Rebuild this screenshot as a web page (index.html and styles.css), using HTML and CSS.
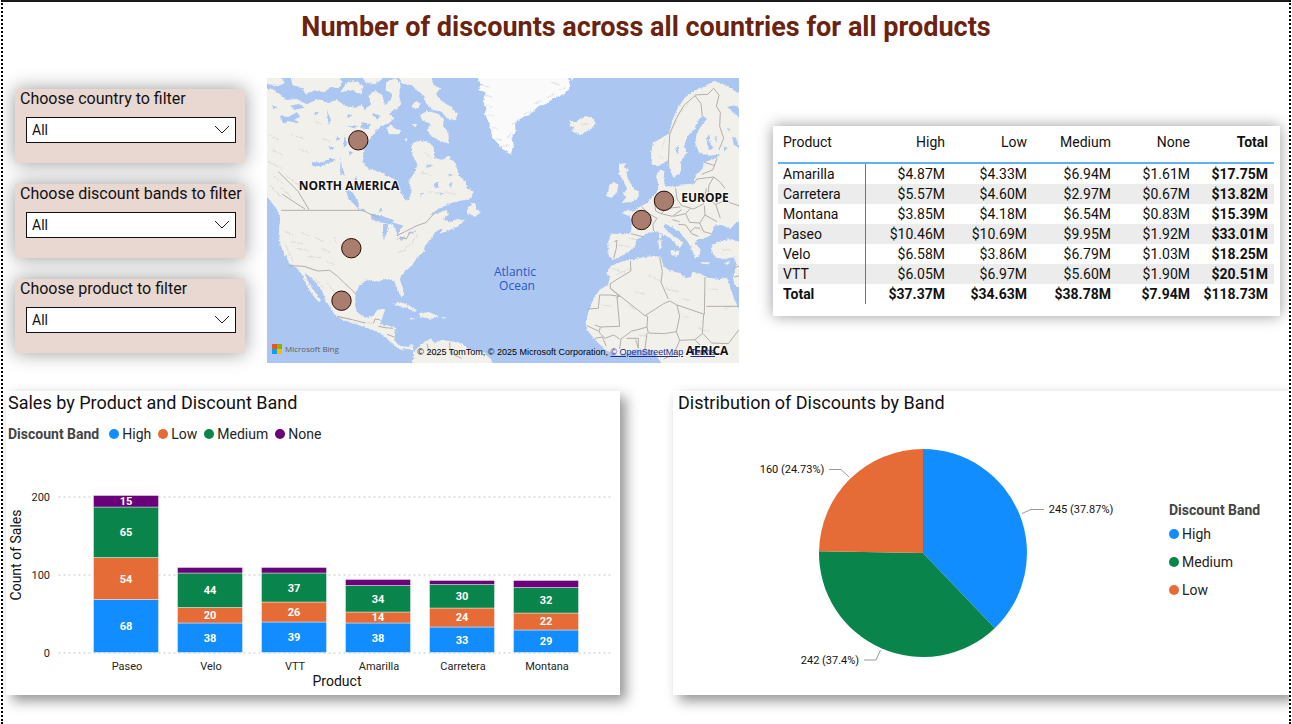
FILE: index.html
```html
<!DOCTYPE html>
<html lang="en">
<head>
<meta charset="utf-8">
<meta name="viewport" content="width=device-width, initial-scale=1">
<title>Number of discounts</title>
<link rel="stylesheet" href="styles.css">
</head>
<body>
<main class="report">
  <h1 class="report-title">Number of discounts across all countries for all products</h1>

  <div class="top-row">
    <form class="filters">
      <div class="filter">
        <label class="filter-label" for="country">Choose country to filter</label>
        <div class="select-box">
          <select id="country" class="select"><option>All</option></select>
          <svg class="chevron" viewBox="0 0 16 9" aria-hidden="true"><path d="M1 1l7 7 7-7"/></svg>
        </div>
      </div>
      <div class="filter">
        <label class="filter-label" for="band">Choose discount bands to filter</label>
        <div class="select-box">
          <select id="band" class="select"><option>All</option></select>
          <svg class="chevron" viewBox="0 0 16 9" aria-hidden="true"><path d="M1 1l7 7 7-7"/></svg>
        </div>
      </div>
      <div class="filter">
        <label class="filter-label" for="product">Choose product to filter</label>
        <div class="select-box">
          <select id="product" class="select"><option>All</option></select>
          <svg class="chevron" viewBox="0 0 16 9" aria-hidden="true"><path d="M1 1l7 7 7-7"/></svg>
        </div>
      </div>
    </form>

    <section class="map" aria-label="Map of countries">
      <svg class="map-svg" viewBox="267 78 472 285" preserveAspectRatio="xMidYMid slice">
        <defs>
          <filter id="coast" x="-5%" y="-5%" width="110%" height="110%">
            <feTurbulence type="fractalNoise" baseFrequency="0.16" numOctaves="3" seed="4"/>
            <feDisplacementMap in="SourceGraphic" scale="9" xChannelSelector="R" yChannelSelector="G"/>
          </filter>
        </defs>
        <rect class="water" x="267" y="78" width="472" height="285"/>
        <g transform="translate(265 75) scale(.33333)">
          <g class="land" filter="url(#coast)">
            <!-- North and Central America -->
            <path d="M-10 45L20 42 45 58 65 75 95 72 125 88 160 72 190 84 215 74 240 92 270 98 290 90 300 104 318 88 310 62 330 48 352 60 360 90 380 72 392 98 372 118 388 128 372 145 350 152 330 172 312 196 296 215 293 262 312 282 345 290 368 305 388 312 402 340 418 372 432 376 440 345 430 318 446 298 458 268 442 240 440 205 462 198 490 200 506 215 508 250 532 254 548 243 572 265 580 300 600 318 604 338 626 350 618 372 580 378 548 388 520 402 495 420 520 414 546 404 552 418 535 432 556 440 580 432 600 436 580 454 548 468 526 476 532 460 510 472 498 490 480 512 476 530 455 550 440 572 418 590 404 612 414 640 418 662 408 664 396 640 386 616 362 612 338 620 304 616 284 632 272 650 270 690 276 712 300 728 326 722 336 704 360 702 352 730 344 748 372 752 392 758 388 794 402 812 430 816 442 808 446 826 424 822 406 824 382 808 362 786 344 774 310 760 268 746 232 734 208 718 196 698 182 676 172 650 150 618 130 602 118 592 132 624 150 650 168 676 162 682 146 664 128 638 114 604 96 580 74 566 58 536 44 504 42 462 46 430 36 404 12 372-10 350Z"/>
            <path d="M440 880L448 828 474 804 498 790 508 806 530 794 566 800 592 806 612 824 650 828 676 850 690 880Z"/>
            <!-- Arctic islands -->
            <path d="M78 9L82 30 112 40 122 58 150 46 178 52 196 36 222 40 232 20 216 0 90 0Z"/>
            <path d="M6 0L40 0 60 22 40 34 6 26Z"/>
            <path d="M226 52L262 46 286 58 296 34 272 18 246 22Z"/>
            <path d="M290 0L300 22 330 28 352 12 350 0Z"/>
            <path d="M364 20L392 10 408 28 402 56 408 88 392 104 376 84 382 58 362 46Z"/>
            <path d="M398 0L412 26 440 30 458 48 478 62 482 84 502 104 530 110 546 130 572 136 578 116 556 94 530 78 512 58 526 40 506 30 498 0Z"/>
            <path d="M440 90L456 78 466 88 458 100 442 98ZM466 120L486 108 520 116 536 134 534 154 550 170 552 206 526 198 500 184 486 166 496 146 470 136ZM366 160L378 148 392 162 408 166 402 178 372 178ZM440 148L456 146 450 156ZM418 192L428 190 424 200Z"/>
            <path d="M606 404L622 384 632 386 634 402 646 412 632 424 606 416Z"/>
            <!-- Caribbean -->
            <path d="M386 686L406 682 430 690 456 706 450 710 424 698 390 690ZM462 714L492 712 522 724 498 732 466 726ZM434 728L452 730 440 734ZM526 726L544 728 538 732Z"/>
            <!-- Iceland -->
            <path d="M906 148L918 146 912 136 930 142 960 124 984 128 992 146 974 164 946 180 920 168 928 156Z"/>
            <!-- Britain and Ireland -->
            <path d="M1062 268L1082 264 1078 278 1090 282 1084 300 1096 324 1110 344 1122 350 1118 372 1100 380 1070 384 1084 366 1074 358 1086 342 1076 318 1062 298ZM1032 334L1046 320 1060 330 1056 352 1040 368 1022 362 1030 350Z"/>
            <!-- Europe -->
            <path d="M1160 268L1158 232 1164 204 1190 188 1212 176 1218 150 1228 120 1242 92 1262 66 1286 48 1320 34 1346 18 1372 26 1390 36 1430 60 1430 438 1412 444 1396 462 1372 450 1348 452 1338 480 1316 492 1298 492 1290 504 1306 522 1304 544 1290 550 1278 516 1262 492 1246 474 1220 456 1202 446 1196 454 1212 474 1238 490 1254 504 1244 520 1230 504 1214 488 1186 474 1168 468 1146 474 1134 484 1114 494 1110 514 1086 534 1058 548 1046 554 1030 542 1030 500 1038 476 1082 478 1098 472 1100 440 1094 424 1068 414 1086 406 1110 408 1124 396 1146 384 1166 362 1178 346 1180 330 1174 302 1184 284 1198 288 1196 310 1200 332 1232 336 1258 328 1286 326 1292 300 1312 284 1318 262 1356 248 1366 238 1330 242 1302 232 1290 202 1296 174 1310 150 1326 132 1314 122 1300 134 1288 162 1268 184 1258 210 1266 232 1248 260 1248 292 1226 308 1216 288 1208 256 1190 268 1176 274Z"/>
            <path d="M1182 470L1190 482 1188 492 1182 488ZM1180 496L1190 496 1190 518 1182 524ZM1216 526L1244 528 1236 544 1218 536ZM1310 562L1336 562 1330 568 1308 566ZM1378 564L1396 558 1390 570Z"/>
            <!-- Africa -->
            <path d="M1056 564L1088 556 1130 548 1164 542 1188 546 1196 574 1212 586 1244 594 1262 610 1278 606 1282 590 1306 596 1328 608 1364 612 1386 608 1396 640 1408 672 1430 720 1430 880 1204 880 1180 852 1166 828 1110 824 1060 842 1020 824 990 794 966 764 962 742 972 706 986 670 1004 644 1028 630 1036 606 1024 594 1036 576Z"/>
            <path d="M1340 512L1362 500 1394 492 1430 502 1430 630 1412 636 1404 610 1414 566 1408 546 1378 552 1354 548 1342 532Z"/>
          </g>
          <path class="ice" filter="url(#coast)" d="M634 0L648 28 640 44 662 52 654 78 664 98 660 116 674 150 682 186 712 222 738 236 746 206 738 188 752 170 750 146 772 126 794 120 820 94 842 88 866 70 900 56 916 36 908 0ZM912 0L920 18 930 0Z"/>
          <path class="ice-shade" filter="url(#coast)" d="M650 30l26 8M658 60l24 6M664 90l20 8M668 118l20 6M680 156l16 4M690 190l22 6M712 214l20-4M728 190l12-20M740 150l18-16M776 118l22-10M810 86l20-10M846 70l22-14M880 46l22-8M860 22l24 8"/>

          <!-- Lakes and inland water -->
          <g class="lake" filter="url(#coast)">
            <path d="M44 122L70 126 94 112 106 124 88 134 104 146 70 138 56 148ZM76 92L104 86 116 98 90 104ZM140 262L172 262 196 248 214 256 190 264 168 274 142 272ZM238 178L246 210 236 218ZM226 240L230 274 240 302 226 294ZM268 318L274 300 278 322ZM240 338L258 346 278 376 284 406 266 386 250 372ZM250 226L264 232 254 244ZM246 154L278 152 268 160ZM186 104L198 136 190 150ZM286 160L290 140 316 148 310 162ZM320 116L346 120 338 134ZM506 328L516 320 522 336 510 340ZM552 328L562 322 558 338ZM466 352L478 354 468 362ZM550 296L566 300 552 304ZM190 214l20 4-14 6ZM216 186l10 6-12 6ZM486 268l16 4-14 8ZM526 352l12 4-12 6ZM288 400l14 4-10 6ZM346 398l8 10-12 2ZM22 92l16 4-14 6ZM150 110l14 4-16 6ZM246 118l20 2-18 8Z"/>
            <path d="M316 414L350 422 388 436 376 448 344 442 320 434ZM354 448L370 446 366 472 356 498 354 474ZM376 440L396 446 416 452 404 464 398 482 392 464ZM394 492L424 482 412 496ZM424 476L452 466 444 476Z"/>
            <path d="M1386 96L1410 90 1430 108 1430 132 1404 112ZM1324 194L1332 176 1338 210 1348 220 1332 226ZM1348 188L1354 184 1356 204ZM1402 188L1412 186 1422 220 1406 208ZM1376 212L1388 220 1378 230ZM1230 222L1242 210 1240 240ZM1386 158L1396 162 1392 170Z"/>
          </g>

          <!-- Relief shading -->
          <g class="relief" filter="url(#coast)">
            <path d="M10 180l30 14M20 224l34 16M8 260l42 20M22 300l32 26M48 338l30 28M96 220l34 12M80 180l36 10M150 140l20 8M170 190l26 8M16 330l34 40M64 300l40 34"/>
            <path d="M60 470l24 10M78 500l36 6M110 472l24 12M96 520l40 8M150 486l24 14M126 544l42 4M170 520l30 14M184 560l26 10M206 486l10 24M62 510l22 50M120 576l28 10M150 610l26 30M184 620l28 36M214 660l34 26M216 724l44 10M296 742l34 4M396 534l24-8M420 520l26-20M440 500l18-20"/>
            <path d="M480 232l18 20M466 292l34 8M490 350l34 4M540 350l30 8M1190 220l10-28M1222 160l16-26M1250 110l20-24M1180 240l14 10M1090 490l24 4M1060 510l34 6M1300 460l20 10M1370 522l30 4M950 150l20-4"/>
            <path d="M1110 650l30 8M1090 690l20 14M1200 640l40 10M1250 670l26 6M1150 600l40 20M1052 600l44-20M1248 720l24 8M1380 700l20-6M1010 690l30 4M1120 780l30 4M1300 760l30 8M1040 580l30 10M1330 640l30 4"/>
          </g>

          <!-- Borders -->
          <g class="border">
            <path d="M48 406H292L322 420 345 430M396 482L424 468 456 452 484 442 510 412M404 486L424 492 436 470M74 572L118 574 158 588 194 586 218 604 240 626 264 648 274 660M216 724L262 734 300 744M326 744L330 732 344 734M340 754L360 758 384 760M366 778L388 786M52 358L120 402M40 290L100 350 132 404M486 806L492 830 520 842M554 802L556 834 590 850"/>
            <path d="M1210 266L1214 178 1232 134 1256 92 1290 62 1308 86 1312 124M1290 60L1328 58 1346 40 1362 60 1354 94 1366 112 1364 154 1376 190 1362 224M1356 250L1344 284 1310 298M1318 262L1350 272M1286 326L1296 312 1346 306 1364 320 1380 340M1232 340L1236 372 1250 392 1286 402 1316 386 1324 340M1346 306L1332 330 1328 370 1352 388 1378 378 1422 392M1168 372L1172 408 1188 416 1222 424 1250 404M1130 396L1152 416 1176 430 1164 448 1166 468M1188 416L1206 400 1246 396M1226 424L1262 416 1276 400M1262 416L1274 442 1304 444 1320 420 1318 392M1240 448L1262 450 1280 476 1300 484M1304 444L1316 470 1338 476M1320 420L1356 440M1352 388L1366 430M1098 476L1136 486M1048 500L1056 496 1054 520 1046 550M1276 470L1290 458 1304 460M1222 434L1244 440"/>
            <path d="M1096 558L1098 588 1064 608 1036 626M1036 626L1036 640 1140 722 1196 686 1214 678 1236 690 1318 718 1320 606M1036 640L1064 664 1034 660 1004 660M1004 660L1000 700 968 702M1064 664L1056 666 1064 754 1006 756 990 750M1140 722L1148 724 1146 756 1118 764 1100 768 1068 792 1064 822M1184 546L1192 590 1188 622 1210 672M1236 690L1244 724 1234 770 1198 776 1150 774 1146 756M1316 718L1312 776 1290 794 1314 820 1332 824M1324 694H1422M1234 770L1244 796 1226 838 1196 852M1244 796L1290 794M1006 756L1002 772 1020 790 1046 780 1064 792M1084 790H1120V820M1120 820L1112 794M1146 774L1140 822M966 752L1000 768M1314 776L1340 804 1390 806 1422 764M990 790L1012 786 1024 814M1404 580L1430 570M1408 606L1430 600"/>
          </g>
        </g>

        <g class="bubble">
          <circle cx="358.300" cy="140.300" r="9.700"/>
          <circle cx="351.300" cy="248.200" r="9.700"/>
          <circle cx="341.500" cy="300.700" r="9.700"/>
          <circle cx="664" cy="200.800" r="9.700"/>
          <circle cx="641.500" cy="220" r="9.700"/>
        </g>
        <g class="place">
          <text x="349" y="190">NORTH AMERICA</text>
          <text x="705" y="202">EUROPE</text>
          <text x="707" y="355">AFRICA</text>
        </g>
        <g class="ocean">
          <text x="515" y="276">Atlantic</text>
          <text x="517" y="290">Ocean</text>
        </g>
        <rect x="272" y="344" width="5" height="5" fill="#f25022"/>
        <rect x="277" y="344" width="5" height="5" fill="#7fba00"/>
        <rect x="272" y="349" width="5" height="5" fill="#00a4ef"/>
        <rect x="277" y="349" width="5" height="5" fill="#ffb900"/>
        <text class="bing" x="285" y="352">Microsoft Bing</text>
      </svg>
      <p class="copyright">© 2025 TomTom, © 2025 Microsoft Corporation, <a href="#osm">© OpenStreetMap</a>&nbsp;&nbsp; <a href="#terms">Terms</a></p>
    </section>

    <section class="table-card">
      <table class="matrix">
        <colgroup><col class="col-name"><col class="col-high"><col class="col-low"><col class="col-medium"><col class="col-none"><col class="col-total"></colgroup>
        <thead>
          <tr><th scope="col">Product</th><th scope="col">High</th><th scope="col">Low</th><th scope="col">Medium</th><th scope="col">None</th><th scope="col" class="strong">Total</th></tr>
        </thead>
        <tbody>
          <tr><th scope="row">Amarilla</th><td>$4.87M</td><td>$4.33M</td><td>$6.94M</td><td>$1.61M</td><td class="strong">$17.75M</td></tr>
          <tr><th scope="row">Carretera</th><td>$5.57M</td><td>$4.60M</td><td>$2.97M</td><td>$0.67M</td><td class="strong">$13.82M</td></tr>
          <tr><th scope="row">Montana</th><td>$3.85M</td><td>$4.18M</td><td>$6.54M</td><td>$0.83M</td><td class="strong">$15.39M</td></tr>
          <tr><th scope="row">Paseo</th><td>$10.46M</td><td>$10.69M</td><td>$9.95M</td><td>$1.92M</td><td class="strong">$33.01M</td></tr>
          <tr><th scope="row">Velo</th><td>$6.58M</td><td>$3.86M</td><td>$6.79M</td><td>$1.03M</td><td class="strong">$18.25M</td></tr>
          <tr><th scope="row">VTT</th><td>$6.05M</td><td>$6.97M</td><td>$5.60M</td><td>$1.90M</td><td class="strong">$20.51M</td></tr>
        </tbody>
        <tfoot>
          <tr><th scope="row">Total</th><td>$37.37M</td><td>$34.63M</td><td>$38.78M</td><td>$7.94M</td><td>$118.73M</td></tr>
        </tfoot>
      </table>
    </section>
  </div>

  <div class="bottom-row">
    <section class="card">
      <h2 class="card-title">Sales by Product and Discount Band</h2>
      <div class="legend">
        <span class="legend-title">Discount Band</span>
        <span class="key"><i class="dot high"></i>High</span>
        <span class="key"><i class="dot low"></i>Low</span>
        <span class="key"><i class="dot medium"></i>Medium</span>
        <span class="key"><i class="dot none"></i>None</span>
      </div>
      <svg class="bars" viewBox="6 450 614 245" role="img" aria-label="Count of sales by product and discount band">
        <g class="grid"><path d="M59 497H614M59 575H614M59 653H614"/></g>
        <g class="tick end"><text x="50" y="501">200</text><text x="50" y="579">100</text><text x="50" y="657">0</text></g>
        <text class="axis" transform="translate(21 555) rotate(-90)">Count of Sales</text>
        <text class="axis" x="337" y="686">Product</text>
        <g class="bar-high"><path d="M93.500 599.500h65v53h-65zM177.500 623h65v29.500h-65zM261.500 622h65v30.500h-65zM345.500 623h65v29.500h-65zM429.500 627h65v25.500h-65zM513.500 630h65v22.500h-65z"/></g>
        <g class="bar-low"><path d="M93.500 557.500h65v42h-65zM177.500 607.500h65v15.500h-65zM261.500 602h65v20h-65zM345.500 612h65v11h-65zM429.500 608h65v19h-65zM513.500 613h65v17h-65z"/></g>
        <g class="bar-medium"><path d="M93.500 507h65v50.500h-65zM177.500 573h65v34.500h-65zM261.500 573h65v29h-65zM345.500 585.500h65v26.500h-65zM429.500 584.500h65v23.500h-65zM513.500 587.500h65v25.500h-65z"/></g>
        <g class="bar-none"><path d="M93.500 495.500h65v11.500h-65zM177.500 567.500h65v5.500h-65zM261.500 567.500h65v5.500h-65zM345.500 579.500h65v6h-65zM429.500 580.500h65v4h-65zM513.500 580.500h65v7h-65z"/></g>
        <g class="value">
          <text x="126" y="505">15</text><text x="126" y="536">65</text><text x="126" y="583">54</text><text x="126" y="630">68</text>
          <text x="210" y="594">44</text><text x="210" y="619">20</text><text x="210" y="642">38</text>
          <text x="294" y="592">37</text><text x="294" y="616">26</text><text x="294" y="641">39</text>
          <text x="378" y="603">34</text><text x="378" y="621">14</text><text x="378" y="642">38</text>
          <text x="462" y="600">30</text><text x="462" y="621">24</text><text x="462" y="644">33</text>
          <text x="546" y="604">32</text><text x="546" y="625">22</text><text x="546" y="645">29</text>
        </g>
        <g class="tick"><text x="127" y="670">Paseo</text><text x="211" y="670">Velo</text><text x="295" y="670">VTT</text><text x="379" y="670">Amarilla</text><text x="463" y="670">Carretera</text><text x="547" y="670">Montana</text></g>
      </svg>
    </section>

    <section class="card">
      <h2 class="card-title">Distribution of Discounts by Band</h2>
      <div class="pie-row">
        <svg class="pie" viewBox="673 415 486 280" role="img" aria-label="Share of discounts by band">
          <path class="slice-high" d="M923 553V449A104 104 0 0 1 994.800 628.200Z"/>
          <path class="slice-medium" d="M923 553L994.800 628.200A104 104 0 0 1 819 551.200Z"/>
          <path class="slice-low" d="M923 553L819 551.200A104 104 0 0 1 923 449Z"/>
          <path class="leader" d="M829 469.500H841L849 477M1022 513.500L1031 509.500H1044M864 660H876L880.500 650"/>
          <g class="callout">
            <text x="792" y="473">160 (24.73%)</text>
            <text x="1081" y="513">245 (37.87%)</text>
            <text x="830" y="664">242 (37.4%)</text>
          </g>
        </svg>
        <div class="legend stacked">
          <span class="legend-title">Discount Band</span>
          <span class="key"><i class="dot high"></i>High</span>
          <span class="key"><i class="dot medium"></i>Medium</span>
          <span class="key"><i class="dot low"></i>Low</span>
        </div>
      </div>
    </section>
  </div>
</main>
</body>
</html>
```

FILE: styles.css
```css
* { box-sizing: border-box; }

body {
  margin: 0;
  background: #fff;
  color: #111;
  font-family: Roboto, "Liberation Sans", sans-serif;
  font-size: 14px;
}

.report {
  min-height: 100vh;
  margin: 0 1px;
  border-top: 2px solid #1c1a19;
  border-left: 2px dotted #000;
  border-right: 2px dotted #000;
  overflow: hidden;
}

.report-title {
  margin: 0;
  padding-top: 8px;
  height: 76px;
  color: #6b2310;
  font-size: 27px;
  line-height: 34px;
  font-weight: 700;
  text-align: center;
}

.top-row {
  display: grid;
  grid-template-columns: minmax(0, 230fr) minmax(0, 472fr) minmax(0, 519fr);
  column-gap: 22px;
  align-items: center;
  padding: 0 9px 0 12px;
}

.filters {
  display: grid;
  grid-template-columns: minmax(0, 1fr);
  row-gap: 21px;
}

.filter {
  height: 74px;
  padding: 0 9px 0 5px;
  background: #e8d8d1;
  box-shadow: 0 0 18px rgba(0, 0, 0, .4);
}

.filter-label {
  display: block;
  font-size: 16px;
  line-height: 20px;
  white-space: nowrap;
}

.select-box {
  display: grid;
  align-items: center;
  margin: 8px 0 0 6px;
}

.select, .chevron { grid-area: 1 / 1; }

.select {
  width: 100%;
  height: 26px;
  padding: 0 5px;
  appearance: none;
  border: 1px solid #111;
  border-radius: 0;
  background: #fff;
  color: #111;
  font: inherit;
}

.chevron {
  justify-self: end;
  width: 16px;
  height: 9px;
  margin-right: 6px;
  fill: none;
  stroke: #222;
  pointer-events: none;
}

.map {
  position: relative;
  overflow: hidden;
}

.map-svg {
  display: block;
  width: 100%;
  height: auto;
}

.water { fill: #abc7f1; }
.land { fill: #f2f0eb; }
.ice { fill: #fafafa; }
.ice-shade { fill: none; stroke: #e6e6e6; stroke-width: 4; }
.lake { fill: #abc7f1; }
.relief { fill: none; stroke: #dedbd5; stroke-width: 3; }
.border { fill: none; stroke: #b3aeac; stroke-width: 3; stroke-linejoin: round; }
.bubble { fill: #9c6a58; fill-opacity: .85; stroke: #260c07; stroke-width: 1; }

.place {
  font: 700 12px "Open Sans", sans-serif;
  fill: #111;
  stroke: #fff;
  stroke-width: 2px;
  stroke-opacity: .7;
  paint-order: stroke;
  text-anchor: middle;
}

.ocean {
  font: 12px "Open Sans", sans-serif;
  fill: #2b55c4;
  text-anchor: middle;
}

.bing {
  font: 8px "Open Sans", sans-serif;
  fill: #5c5c5c;
}

.copyright {
  position: absolute;
  right: 24px;
  bottom: 5px;
  margin: 0;
  color: #000;
  font: 9px/12px "Liberation Sans", sans-serif;
  white-space: nowrap;
}

.copyright a { color: #1b2d8f; }

.table-card {
  margin-left: 12px;
  padding: 5px 6px 12px 5px;
  background: #fff;
  box-shadow: 0 0 14px rgba(0, 0, 0, .4);
}

.matrix {
  width: 100%;
  border-collapse: separate;
  border-spacing: 0;
  table-layout: fixed;
  font-size: 14px;
  line-height: 20px;
}

.col-name { width: 88px; }
.col-high { width: 85px; }
.col-low { width: 82px; }
.col-medium { width: 84px; }
.col-none { width: 79px; }

.matrix th, .matrix td {
  height: 20px;
  padding: 0 6px 0 0;
  font-weight: 400;
  text-align: right;
}

.matrix th:first-child { padding-left: 5px; text-align: left; }
.matrix thead th { height: 33px; padding-bottom: 8px; border-bottom: 2px solid #5fb0f9; }
.matrix tbody th, .matrix tfoot th { border-right: 1px solid #118dff; }
.matrix tbody tr:nth-child(even) { background: #ececec; }
.matrix .strong, .matrix tfoot th, .matrix tfoot td { font-weight: 700; }

.bottom-row {
  display: grid;
  grid-template-columns: minmax(0, 614fr) minmax(0, 616fr);
  column-gap: 53px;
  margin-top: 28px;
  padding-left: 3px;
}

.card {
  background: #fff;
  box-shadow: 6px 6px 12px rgba(0, 0, 0, .42);
}

.card-title {
  margin: 0;
  padding: 0 5px;
  font-size: 18px;
  line-height: 24px;
  font-weight: 400;
  white-space: nowrap;
}

.card:first-child .card-title { padding-left: 2px; }

.legend {
  display: flex;
  align-items: center;
  gap: 7px;
  height: 35px;
  padding: 2px 2px 0;
  color: #252423;
}

.legend-title { color: #444; font-weight: 700; margin-right: 3px; }
.key { display: flex; align-items: center; gap: 3px; }
.dot { width: 10px; height: 10px; border-radius: 50%; }
.high { background: #118dff; }
.low { background: #e66c37; }
.medium { background: #09854b; }
.none { background: #6b007b; }

.bars, .pie {
  display: block;
  width: 100%;
  height: auto;
}

.grid { fill: none; stroke: #c4c4c4; stroke-width: 1; stroke-dasharray: 1 4; stroke-linecap: square; }
.tick { font-size: 11px; fill: #252423; text-anchor: middle; }
.end { text-anchor: end; }
.axis { font-size: 14px; fill: #111; text-anchor: middle; }
.value { font-size: 11px; font-weight: 700; fill: #fff; text-anchor: middle; }

.bar-high, .slice-high { fill: #118dff; }
.bar-low, .slice-low { fill: #e66c37; }
.bar-medium, .slice-medium { fill: #09854b; }
.bar-none { fill: #6b007b; }
.bar-high, .bar-low, .bar-medium, .bar-none { stroke: #fff; stroke-opacity: .4; stroke-width: 1; }

.leader { fill: none; stroke: #999; }
.callout { font-size: 11px; fill: #111; text-anchor: middle; }

.pie-row {
  display: grid;
  grid-template-columns: minmax(0, 486fr) minmax(0, 130fr);
}

.stacked {
  flex-direction: column;
  align-items: flex-start;
  gap: 0;
  height: auto;
  padding: 85px 0 0 10px;
  line-height: 28px;
}

.stacked .legend-title { line-height: 20px; }
```
